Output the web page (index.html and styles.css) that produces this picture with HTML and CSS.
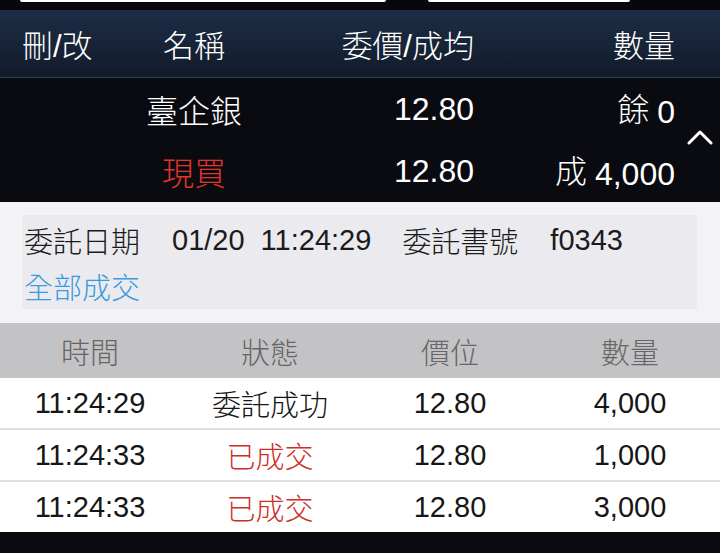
FILE: index.html
```html
<!DOCTYPE html>
<html>
<head>
	<meta charset="utf-8">
	<title>委託明細</title>
	<link rel="stylesheet" href="styles.css">
</head>
<body>
	<div class="app">
		<div class="search-strip">
			<span class="pill pill-wide"></span>
			<span class="pill pill-narrow"></span>
		</div>

		<div class="order-head">
			<span>刪/改</span>
			<span class="c-name">名稱</span>
			<span class="c-price">委價/成均</span>
			<span class="c-qty">數量</span>
		</div>

		<div class="order-body">
			<div class="order-lines">
				<span></span>
				<span class="c-name">臺企銀</span>
				<span class="c-price">12.80</span>
				<span class="c-qty"><span class="unit">餘</span>0</span>

				<span></span>
				<span class="c-name buy">現買</span>
				<span class="c-price">12.80</span>
				<span class="c-qty"><span class="unit">成</span>4,000</span>
			</div>
			<div class="toggle">
				<svg width="26" height="16" viewBox="0 0 26 16">
					<polyline points="2,14 13,3 24,14" fill="none" stroke="#fff" stroke-width="3" stroke-linecap="round" stroke-linejoin="round"/>
				</svg>
			</div>
		</div>

		<div class="detail">
			<div class="detail-box">
				<div class="detail-line">
					<span>委託日期</span>
					<span class="date">01/20</span>
					<span class="time">11:24:29</span>
					<span class="label-no">委託書號</span>
					<span class="order-no">f0343</span>
				</div>
				<div class="detail-line status">全部成交</div>
			</div>
		</div>

		<div class="fills">
			<div class="fill-head">
				<span>時間</span>
				<span>狀態</span>
				<span>價位</span>
				<span>數量</span>
			</div>
			<div class="fill-row">
				<span>11:24:29</span>
				<span>委託成功</span>
				<span>12.80</span>
				<span>4,000</span>
			</div>
			<div class="fill-row">
				<span>11:24:33</span>
				<span class="done">已成交</span>
				<span>12.80</span>
				<span>1,000</span>
			</div>
			<div class="fill-row">
				<span>11:24:33</span>
				<span class="done">已成交</span>
				<span>12.80</span>
				<span>3,000</span>
			</div>
		</div>

		<div class="bottom-bar"></div>
	</div>
</body>
</html>
```

FILE: styles.css
```css
body {
	margin: 0;
	background-color: #0a0b10;
	font-family: "Liberation Sans", "Noto Sans CJK TC", sans-serif;
	font-weight: 300;
}
.app {
	width: 720px;
	height: 553px;
	overflow: hidden;
}

/* top: bottoms of the two search fields */
.search-strip {
	height: 10px;
	display: flex;
	gap: 42px;
	padding-left: 20px;
	background-color: #07080c;
}
.pill {
	height: 2px;
	background-color: #fff;
	border-radius: 0 0 5px 5px;
}
.pill-wide {
	width: 366px;
}
.pill-narrow {
	width: 202px;
}

/* order summary */
.order-head,
.order-lines {
	display: grid;
	grid-template-columns: 97px 150px 205px 1fr;
	align-items: center;
	color: #fff;
}
.order-head {
	height: 67px;
	padding: 0 45px 0 22px;
	border-bottom: 1px solid #2e4253;
	background: linear-gradient(#1d2d46, #121b2a);
	font-size: 31px;
}
.c-name {
	text-align: center;
}
.c-price,
.c-qty {
	text-align: right;
}
.order-body {
	display: flex;
	background-color: #0a0b10;
}
.order-lines {
	flex: 1;
	padding-left: 22px;
	grid-auto-rows: 62px;
	font-size: 32px;
}
.unit {
	margin-right: 8px;
	position: relative;
	top: -2px;
}
.buy {
	color: #e2352b;
}
.toggle {
	width: 45px;
	display: flex;
	align-items: center;
	justify-content: center;
	padding-left: 5px;
	padding-bottom: 6px;
	box-sizing: border-box;
}

/* order detail */
.detail {
	background-color: #f3f3f6;
	padding: 13px 23px 14px 22px;
}
.detail-box {
	background-color: #ebebef;
	padding: 2px 2px 0;
}
.detail-line {
	height: 46px;
	display: flex;
	align-items: center;
	font-size: 29px;
	color: #1b1b1b;
}
.date {
	margin-left: 32px;
}
.time {
	margin-left: 16px;
}
.label-no {
	margin-left: 31px;
}
.order-no {
	margin-left: 32px;
}
.status {
	color: #3b9ade;
}

/* fills table */
.fill-head,
.fill-row {
	display: grid;
	grid-template-columns: repeat(4, 180px);
	align-items: center;
	text-align: center;
	font-size: 29px;
}
.fill-head {
	height: 55px;
	background-color: #c3c3c5;
	color: #666;
}
.fill-row {
	height: 50px;
	background-color: #fff;
	color: #161616;
	border-bottom: 2px solid #e0e0e2;
}
.fill-row:last-child {
	border-bottom: none;
}
.done {
	color: #cc2f28;
}
.bottom-bar {
	height: 21px;
	background-color: #0a0b10;
}
```
